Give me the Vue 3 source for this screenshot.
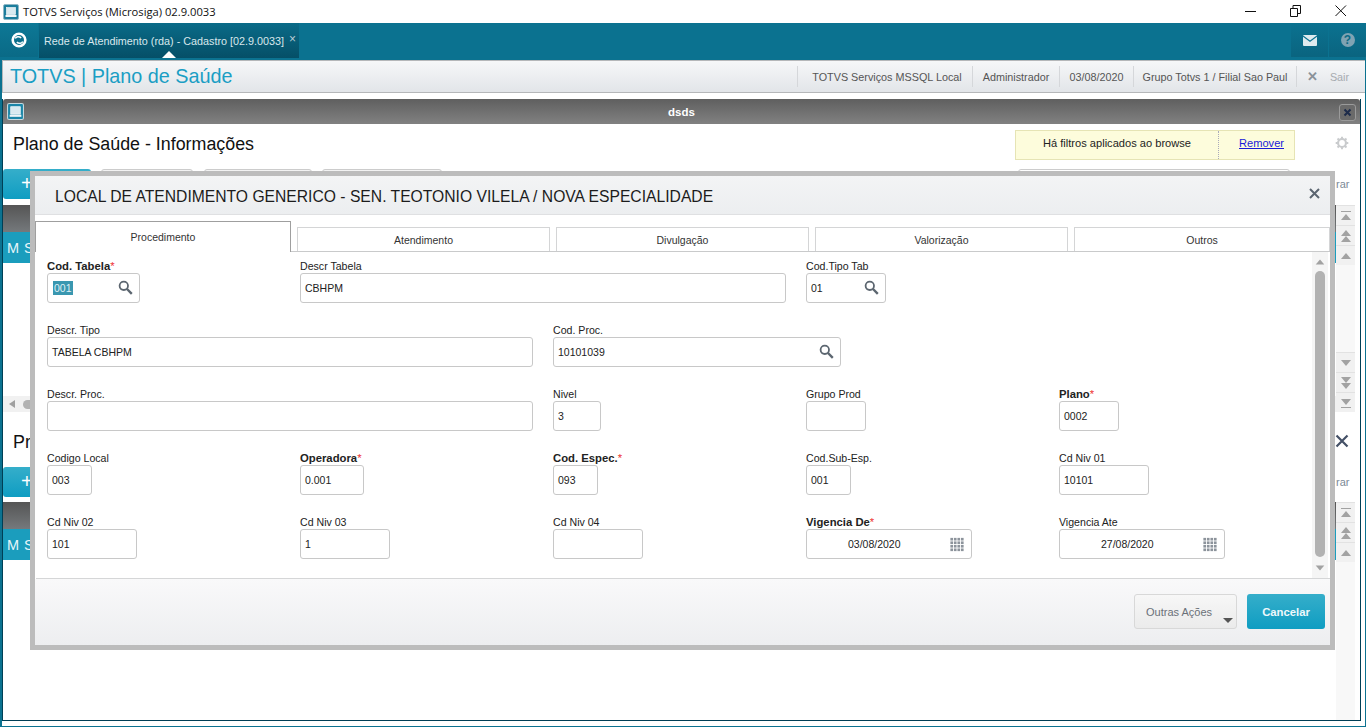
<script setup>
const rows = [
  [
    { label: 'Cod. Tabela', req: true, w: 93, sel: '001', icon: 'search' },
    { label: 'Descr Tabela', w: 486, span: 2, val: 'CBHPM' },
    { label: 'Cod.Tipo Tab', w: 80, val: '01', icon: 'search' }
  ],
  [
    { label: 'Descr. Tipo', w: 486, span: 2, val: 'TABELA CBHPM' },
    { label: 'Cod. Proc.', w: 288, span: 2, val: '10101039', icon: 'search' }
  ],
  [
    { label: 'Descr. Proc.', w: 486, span: 2, val: '' },
    { label: 'Nivel', w: 48, val: '3' },
    { label: 'Grupo Prod', w: 60, val: '' },
    { label: 'Plano', req: true, w: 60, val: '0002' }
  ],
  [
    { label: 'Codigo Local', w: 45, val: '003' },
    { label: 'Operadora', req: true, w: 64, val: '0.001' },
    { label: 'Cod. Espec.', req: true, w: 45, val: '093' },
    { label: 'Cod.Sub-Esp.', w: 45, val: '001' },
    { label: 'Cd Niv 01', w: 90, val: '10101' }
  ],
  [
    { label: 'Cd Niv 02', w: 90, val: '101' },
    { label: 'Cd Niv 03', w: 90, val: '1' },
    { label: 'Cd Niv 04', w: 90, val: '' },
    { label: 'Vigencia De', req: true, w: 166, val: '03/08/2020', icon: 'cal' },
    { label: 'Vigencia Ate', w: 166, val: '27/08/2020', icon: 'cal' }
  ]
]
const fields = rows.flat()
const tabs = ['Atendimento', 'Divulgação', 'Valorização', 'Outros']
const calCells = Array.from({ length: 16 }, (_, i) => ({ x: 1 + (i % 4) * 4, y: 1 + Math.floor(i / 4) * 4 }))
const arrows = {
  top: 'M2 2h10v1H2zM7 5l5 6H2z',
  dbl: 'M7 1l5 6H2zM7 7l5 6H2z',
  up: 'M7 4l5 6H2z',
  dn: 'M2 4h10l-5 6z',
  ddn: 'M2 1h10l-5 6zM2 7h10l-5 6z',
  bot: 'M2 3h10l-5 6zM2 11h10v1H2z'
}
const upSet = [arrows.top, arrows.dbl, arrows.up]
const dnSet = [arrows.dn, arrows.ddn, arrows.bot]
</script>

<template>
  <div class="app">
    <div class="titlebar">
      <svg class="winicon" viewBox="0 0 16 16" width="16" height="16">
        <rect x="0.5" y="0.5" width="15" height="15" rx="1.5" fill="#1b7d9c" stroke="#8fb8c6" />
        <rect x="3.5" y="3.5" width="9" height="7" fill="#d9eaf0" stroke="#fff" stroke-width="0.6" />
        <rect x="2.5" y="11" width="11" height="2" fill="#f0f6f8" />
      </svg>
      <span class="apptitle">TOTVS Serviços (Microsiga) 02.9.0033</span>
      <div class="winbtns">
        <svg width="14" height="14" viewBox="0 0 14 14"><path d="M1 7.5h11" stroke="#111" fill="none" /></svg>
        <svg width="14" height="14" viewBox="0 0 14 14"><path d="M1.5 4.500h7v8h-7zM4 4.500V1.500h7.500v8H8.500" stroke="#111" fill="none" /></svg>
        <svg width="14" height="14" viewBox="0 0 14 14"><path d="M1.500 1.500l10.500 10.500M12 1.500L1.500 12" stroke="#111" fill="none" /></svg>
      </div>
    </div>

    <div class="shell">
      <div class="topbar">
        <div class="homeseg">
          <svg width="18" height="18" viewBox="0 0 18 18">
            <circle cx="9" cy="9" r="6.300" fill="#0b6f8c" stroke="#fff" stroke-width="2.600" />
            <path d="M5.300 7.600C6 5.600 9 5 11.200 6.900M12.700 10.400C12 12.400 9 13 6.800 11.100" fill="none" stroke="#fff" stroke-width="1.500" />
          </svg>
        </div>
        <div class="apptab">
          <span>Rede de Atendimento (rda) - Cadastro [02.9.0033]</span>
          <span class="tabx">×</span>
          <i class="caret"></i>
        </div>
        <div class="topright">
          <div class="seg mail">
            <svg width="14" height="11" viewBox="0 0 14 11">
              <rect width="14" height="11" rx="1" fill="#dfeaee" />
              <path d="M0 1l7 5.200L14 1" stroke="#0b7290" stroke-width="1.100" fill="none" />
            </svg>
          </div>
          <div class="seg help"><span>?</span></div>
        </div>
      </div>

      <div class="header">
        <div class="brand">TOTVS | Plano de Saúde</div>
        <div class="hitem h1">TOTVS Serviços MSSQL Local</div>
        <div class="hitem h2">Administrador</div>
        <div class="hitem h3">03/08/2020</div>
        <div class="hitem h4">Grupo Totvs 1 / Filial Sao Paul</div>
        <div class="hitem sair"><b>✕</b><span>Sair</span></div>
      </div>

      <div class="window">
        <div class="wintitle">
          <svg class="winicon2" viewBox="0 0 16 16" width="17" height="17">
            <rect x="0.500" y="0.500" width="15" height="15" rx="1.500" fill="#1b86a8" stroke="#c5d8de" />
            <rect x="3.500" y="3.500" width="9" height="7" fill="#d9eaf0" stroke="#fff" stroke-width="0.600" />
            <rect x="2.500" y="11" width="11" height="2" fill="#f0f6f8" />
          </svg>
          <span class="dsds">dsds</span>
          <div class="winclose">
            <svg width="9" height="9" viewBox="0 0 9 9"><path d="M1.500 1.500l6 6M7.500 1.500l-6 6" stroke="#1d2b4a" stroke-width="2" /></svg>
          </div>
        </div>

        <div class="browse first">
          <div class="headrow">
            <h2>Plano de Saúde - Informações</h2>
            <div class="notice">
              <span class="ntext">Há filtros aplicados ao browse</span>
              <a class="nlink">Remover</a>
            </div>
            <svg class="gear" width="14" height="14" viewBox="0 0 16 16">
              <circle cx="8" cy="8" r="4.500" fill="#fff" stroke="#c9cbcd" stroke-width="2.400" />
              <path d="M8 0.800v2.400M8 12.800v2.400M0.800 8h2.400M12.800 8h2.400M2.900 2.900l1.700 1.700M11.400 11.400l1.700 1.700M2.900 13.100l1.700-1.700M11.400 4.600l1.700-1.700" stroke="#c9cbcd" stroke-width="2.200" />
            </svg>
          </div>
          <div class="toolrow">
            <div class="btn primary w88">+</div>
            <div class="btn w92"></div>
            <div class="btn w108"></div>
            <div class="btn w120"></div>
            <div class="search"></div>
            <div class="rar">rar</div>
          </div>
          <div class="gridrow g1">
            <div class="gridmain">
              <div class="ghead"></div>
              <div class="gbody">M S</div>
              <div class="hscroll"><i class="al"></i><i class="hthumb"></i></div>
            </div>
            <div class="gscroll">
              <div v-for="d in upSet" :key="d" class="sb"><svg width="14" height="14" viewBox="0 0 14 14"><path :d="d" fill="#a2a2a2" /></svg></div>
              <div class="gap"></div>
              <div v-for="d in dnSet" :key="d" class="sb"><svg width="14" height="14" viewBox="0 0 14 14"><path :d="d" fill="#a2a2a2" /></svg></div>
            </div>
          </div>
        </div>

        <div class="browse second">
          <div class="headrow h2row">
            <h2>Pr</h2>
            <svg class="bigx" width="14" height="14" viewBox="0 0 14 14"><path d="M1.500 1.500l11 11M12.500 1.500l-11 11" stroke="#445066" stroke-width="2.200" /></svg>
          </div>
          <div class="toolrow t2">
            <div class="btn primary w88">+</div>
            <div class="rar">rar</div>
          </div>
          <div class="gridrow g2">
            <div class="gridmain">
              <div class="ghead"></div>
              <div class="gbody">M S</div>
            </div>
            <div class="gscroll">
              <div v-for="d in upSet" :key="d" class="sb"><svg width="14" height="14" viewBox="0 0 14 14"><path :d="d" fill="#a2a2a2" /></svg></div>
            </div>
          </div>
        </div>
      </div>
    </div>

    <div class="modal">
      <div class="mhead">
        <span>LOCAL DE ATENDIMENTO GENERICO - SEN. TEOTONIO VILELA / NOVA ESPECIALIDADE</span>
        <svg class="mclose" width="11" height="11" viewBox="0 0 11 11"><path d="M1 1l9 9M10 1l-9 9" stroke="#5b6570" stroke-width="2" /></svg>
      </div>
      <div class="mtabs">
        <div class="mtab active">Procedimento</div>
        <div v-for="t in tabs" :key="t" class="mtab">{{ t }}</div>
      </div>
      <div class="mform">
        <div class="fgrid">
          <div
            v-for="f in fields"
            :key="f.label"
            class="field"
            :class="{ span2: f.span === 2 }"
          >
            <label :class="{ req: f.req }">{{ f.label }}<em v-if="f.req">*</em></label>
            <div class="input" :class="{ date: f.icon === 'cal' }" :style="{ width: f.w + 'px' }">
              <span v-if="f.sel" class="sel">{{ f.sel }}</span>
              <span v-else>{{ f.val }}</span>
              <svg v-if="f.icon === 'search'" class="ico" width="15" height="15" viewBox="0 0 15 15">
                <circle cx="5.800" cy="5.800" r="4.200" fill="none" stroke="#5c6670" stroke-width="1.800" />
                <path d="M9 9l4.800 4.800" stroke="#5c6670" stroke-width="2.400" />
              </svg>
              <svg v-if="f.icon === 'cal'" class="ico cal" width="16" height="15" viewBox="0 0 17 17">
                <rect v-for="c in calCells" :key="c.x + '-' + c.y" :x="c.x" :y="c.y" width="3" height="3" fill="#8c939b" />
              </svg>
            </div>
          </div>
        </div>
        <div class="vscroll">
          <svg width="12" height="12" viewBox="0 0 14 14"><path :d="arrows.up" fill="#a2a2a2" /></svg>
          <div class="vthumb"></div>
          <svg width="12" height="12" viewBox="0 0 14 14"><path :d="arrows.dn" fill="#a2a2a2" /></svg>
        </div>
      </div>
      <div class="mfoot">
        <div class="other">Outras Ações<i></i></div>
        <div class="cancel">Cancelar</div>
      </div>
    </div>
  </div>
</template>

<style>
html, body { margin: 0; padding: 0; background: #fff; overflow: hidden; }
</style>

<style scoped>
.app {
  position: relative;
  width: 1366px;
  height: 727px;
  overflow: hidden;
  background: #fff;
  font-family: "Liberation Sans", Arial, sans-serif;
  font-size: 11px;
  color: #222;
}
.titlebar {
  height: 23px;
  display: flex;
  align-items: center;
  padding-left: 3px;
  box-sizing: border-box;
}
.apptitle {
  margin-left: 4px;
  font-family: "Open Sans", sans-serif;
  font-size: 11.200px;
  color: #111;
  white-space: nowrap;
}
.winbtns {
  margin-left: auto;
  display: flex;
  gap: 31px;
  padding-right: 18px;
  margin-top: -2px;
}
.shell {
  height: 704px;
  box-sizing: border-box;
  border: solid #0b7290;
  border-width: 0 1px 1px 2px;
  display: flex;
  flex-direction: column;
}
.topbar {
  height: 37px;
  margin-left: -2px;
  margin-right: -1px;
  background: #0b7290;
  display: flex;
  flex: none;
  align-items: stretch;
}
.homeseg {
  width: 38px;
  height: 34px;
  display: flex;
  align-items: center;
  justify-content: center;
  background: linear-gradient(#0d7896, #0a6a86);
}
.apptab {
  position: relative;
  margin-left: 1px;
  width: 260px;
  height: 35px;
  box-sizing: border-box;
  padding: 0 0 0 5px;
  display: flex;
  align-items: center;
  color: #d8e7ec;
  font-size: 10.800px;
  white-space: nowrap;
  background: linear-gradient(#0a6b88, #054f67);
}
.tabx { margin-left: 5px; color: #b7cdd5; font-size: 12px; margin-top: -3px; }
.caret {
  position: absolute;
  left: 123px;
  bottom: 0;
  border: 7px solid transparent;
  border-top: 0;
  border-bottom-color: #fff;
}
.topright { margin-left: auto; display: flex; height: 34px; }
.seg {
  width: 37px;
  display: flex;
  align-items: center;
  justify-content: center;
  margin-left: 1px;
  background: linear-gradient(#0b7290, #0a647f);
}
.help span {
  width: 14px;
  height: 14px;
  border-radius: 50%;
  background: #7fa3b3;
  color: #0b6a85;
  font-weight: bold;
  font-size: 12px;
  line-height: 14px;
  text-align: center;
}
.header {
  height: 33px;
  flex: none;
  box-sizing: border-box;
  border: 1px solid #b5b7b9;
  border-width: 1px 0 1px 0;
  background: linear-gradient(#f6f7f8, #e2e5e9);
  display: flex;
  align-items: center;
  color: #555;
  box-shadow: inset 1px 0 0 #b5b7b9;
}
.brand {
  margin-left: 8px;
  font-size: 19.800px;
  color: #1a9ec4;
  width: 787px;
  flex: none;
  white-space: nowrap;
}
.hitem {
  height: 21px;
  display: flex;
  align-items: center;
  justify-content: center;
  border-left: 1px solid #d5d7da;
  box-sizing: border-box;
  white-space: nowrap;
  font-size: 10.800px;
}
.h1 { width: 175px; padding-left: 4px; }
.h2 { width: 87px; }
.h3 { width: 74px; }
.h4 { width: 163px; }
.sair { width: 60px; gap: 12px; color: #a6abb0; padding-left: 3px; }
.sair b { color: #8a9299; font-size: 13px; }
.window {
  flex: 1;
  margin: 6px 4px 5px 0;
  border: 1px solid #003f55;
  border-width: 0 1px 1px 1px;
  display: flex;
  flex-direction: column;
  background: #fff;
  min-height: 0;
}
.wintitle {
  height: 25px;
  flex: none;
  display: flex;
  align-items: center;
  justify-content: center;
  position: relative;
  background: linear-gradient(#5f5f5f, #818181);
  border-radius: 3px 3px 0 0;
  color: #fff;
}
.winicon2 { position: absolute; left: 4px; top: 4px; }
.dsds { font-weight: bold; font-size: 11.500px; }
.winclose {
  position: absolute;
  right: 4px;
  top: 5px;
  width: 15px;
  height: 15px;
  border: 1px solid #9a9a9a;
  border-radius: 3px;
  background: #6a6a6a;
  display: flex;
  align-items: center;
  justify-content: center;
}
.browse { flex: none; }
.first { height: 288px; }
.headrow {
  height: 45px;
  display: flex;
  align-items: center;
  position: relative;
}
h2 {
  margin: -4px 0 0 10px;
  font-weight: normal;
  font-size: 17.850px;
  color: #111;
  white-space: nowrap;
}
.notice {
  position: absolute;
  left: 1012px;
  top: 6px;
  width: 280px;
  height: 30px;
  box-sizing: border-box;
  background: #fdfcdc;
  border: 1px solid #e6e4b5;
  display: flex;
  align-items: stretch;
  color: #222;
  font-size: 11.100px;
}
.ntext { width: 203px; box-sizing: border-box; padding-left: 27px; border-right: 1px dotted #aab; line-height: 25px; }
.nlink { margin-left: 20px; color: #1a1ad8; text-decoration: underline; line-height: 25px; }
.gear { position: absolute; left: 1332px; top: 12px; }
.toolrow {
  height: 36px;
  display: flex;
  gap: 10px;
  position: relative;
}
.btn {
  height: 30px;
  box-sizing: border-box;
  border: 1px solid #ccc;
  border-radius: 3px;
  background: #f2f2f2;
}
.primary {
  background: linear-gradient(#35aeca, #0f9dc2);
  border: 0;
  color: #fff;
  font-size: 20px;
  line-height: 28px;
  padding-left: 18px;
}
.w88 { width: 88px; }
.w92 { width: 92px; margin-right: 1px; }
.w108 { width: 108px; }
.w120 { width: 120px; }
.search {
  position: absolute;
  left: 1015px;
  top: 0;
  width: 272px;
  height: 26px;
  box-sizing: border-box;
  border: 1px solid #ccc;
  border-radius: 3px;
}
.rar {
  position: absolute;
  left: 1333px;
  top: 9px;
  color: #7c8a96;
  font-size: 11px;
}
.gridrow { display: flex; }
.gridmain { width: 1333px; flex: none; }
.ghead {
  height: 27px;
  background: linear-gradient(#555, #75797c);
}
.gbody {
  height: 31px;
  background: #1b9dbd;
  color: #e7f5f9;
  font-size: 14.500px;
  line-height: 33px;
  padding-left: 4px;
  letter-spacing: 0.500px;
  white-space: nowrap;
}
.g1 { height: 207px; position: relative; }
.hscroll {
  position: absolute;
  left: 0;
  top: 191px;
  width: 1333px;
  height: 16px;
  background: #f1f1f1;
  display: flex;
  align-items: center;
}
.al {
  margin-left: 6px;
  border: 4px solid transparent;
  border-left: 0;
  border-right: 6px solid #a0a0a0;
}
.hthumb {
  margin-left: 8px;
  width: 12px;
  height: 9px;
  border-radius: 5px;
  background: #b2b2b2;
}
.gscroll {
  width: 19px;
  flex: none;
  background: #f8f8f8;
  display: flex;
  flex-direction: column;
}
.gap { height: 87px; flex: none; }
.sb {
  height: 20px;
  box-sizing: border-box;
  border-top: 1px solid #e2e2e2;
  background: #f1f1f1;
  display: flex;
  align-items: center;
  justify-content: center;
}
.second { flex: 1; display: flex; flex-direction: column; min-height: 0; }
.h2row { height: 55px; flex: none; }
.h2row h2 { margin-top: 5px; }
.bigx { position: absolute; left: 1332px; top: 22px; }
.t2 { flex: none; height: 35px; }
.g2 { flex: 1; min-height: 0; }

.modal {
  position: absolute;
  left: 30px;
  top: 171px;
  width: 1305px;
  height: 479px;
  box-sizing: border-box;
  border: 5px solid #bcbcbc;
  background: #fff;
  display: flex;
  flex-direction: column;
}
.mhead {
  height: 39px;
  flex: none;
  box-sizing: border-box;
  padding: 3px 0 0 20px;
  display: flex;
  align-items: center;
  background: linear-gradient(#f3f4f5, #eceef0);
  border-bottom: 1px solid #dfe0e2;
  font-size: 15.680px;
  color: #1c1c1c;
  white-space: nowrap;
  position: relative;
}
.mclose { position: absolute; right: 10px; top: 12px; }
.mtabs {
  height: 37px;
  flex: none;
  display: flex;
  align-items: flex-end;
  gap: 6px;
  box-sizing: border-box;
  border-bottom: 1px solid #c9cacb;
}
.mtab {
  width: 253px;
  height: 24px;
  box-sizing: border-box;
  border: 1px solid #d4d5d6;
  border-bottom: 0;
  display: flex;
  align-items: center;
  justify-content: center;
  font-size: 10.500px;
  color: #333;
  padding-top: 1px;
}
.mtab.active {
  width: 256px;
  height: 31px;
  margin-bottom: -1px;
  background: #fff;
  border-color: #9f9f9f;
  position: relative;
  padding: 0 0 1px;
}
.mtab:last-child { width: 256px; }
.mform {
  flex: 1;
  min-height: 0;
  position: relative;
  padding: 6px 0 0 11px;
  margin-left: 1px;
  border-bottom: 1px solid #d5d6d7;
  box-sizing: border-box;
}
.fgrid {
  display: grid;
  grid-template-columns: repeat(5, 253px);
  grid-auto-rows: 64px;
}
.span2 { grid-column: span 2; }
.field { display: flex; flex-direction: column; }
label {
  height: 15px;
  line-height: 17px;
  font-size: 10.600px;
  color: #222;
  white-space: nowrap;
}
label.req { font-weight: bold; font-size: 11.300px; }
label em { color: #e33; font-style: normal; font-weight: normal; }
.input {
  height: 30px;
  box-sizing: border-box;
  border: 1px solid #c8c8c8;
  border-radius: 3px;
  background: #fff;
  display: flex;
  align-items: center;
  padding-left: 4px;
  font-size: 10.500px;
  color: #222;
  position: relative;
}
.date { padding-left: 41px; }
.sel { background: #3a97b0; color: #dff0f5; padding: 1px; margin-left: 1px; }
.ico { position: absolute; right: 6px; top: 6px; }
.cal { right: 6px; top: 7px; }
.vscroll {
  position: absolute;
  right: 2px;
  top: 0;
  width: 16px;
  height: 326px;
  background: #f5f5f5;
  display: flex;
  flex-direction: column;
  align-items: center;
  padding-top: 4px;
  box-sizing: border-box;
}
.vthumb {
  width: 10px;
  height: 286px;
  margin: 3px 0 5px;
  border-radius: 5px;
  background: #b2b2b2;
  flex: none;
}
.mfoot {
  height: 66px;
  flex: none;
  box-sizing: border-box;
  padding: 15px 5px 0 0;
  display: flex;
  justify-content: flex-end;
  gap: 10px;
  background: linear-gradient(#f9f9fa, #edeef0);
}
.other {
  width: 103px;
  height: 35px;
  box-sizing: border-box;
  border: 1px solid #d8d8d8;
  border-radius: 3px;
  background: linear-gradient(#f7f7f7, #ebebeb);
  color: #6a7078;
  display: flex;
  align-items: center;
  padding-left: 11px;
  position: relative;
  font-size: 11px;
}
.other i {
  position: absolute;
  right: 3px;
  bottom: 5px;
  border: 4px solid transparent;
  border-bottom: 0;
  border-left-width: 5px;
  border-right-width: 5px;
  border-top: 5px solid #555;
}
.cancel {
  width: 78px;
  height: 35px;
  border-radius: 3px;
  background: linear-gradient(#35aeca, #0f9dc2);
  color: #eef8fb;
  display: flex;
  align-items: center;
  justify-content: center;
  font-weight: bold;
  font-size: 11.300px;
}
</style>
